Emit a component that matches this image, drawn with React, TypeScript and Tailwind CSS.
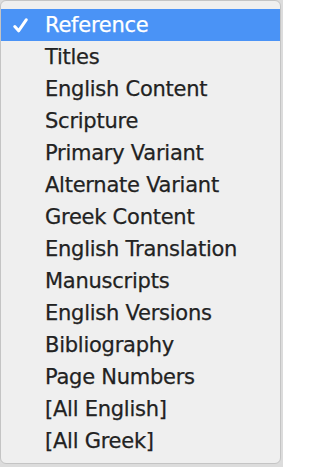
const items = [
  "Reference",
  "Titles",
  "English Content",
  "Scripture",
  "Primary Variant",
  "Alternate Variant",
  "Greek Content",
  "English Translation",
  "Manuscripts",
  "English Versions",
  "Bibliography",
  "Page Numbers",
  "[All English]",
  "[All Greek]",
]

const Check = () => (
  <svg width="15" height="15" viewBox="0 0 15 15" className="block">
    <path
      d="M1.8 8.6 L5.6 12.8 L13.2 1.8"
      fill="none"
      stroke="white"
      strokeWidth="3"
      strokeLinecap="round"
      strokeLinejoin="round"
    />
  </svg>
)

export default function App() {
  return (
    <div className="w-[283px] h-[467px] bg-[#dcdcdc] overflow-hidden">
      <div className="w-[281px] h-[464px] bg-[#efefef] border border-[#c4c4c4] rounded-[6px] pt-[8px] pb-[6px] font-['DejaVu_Sans',sans-serif]">
        {items.map((label, i) => {
          const active = i === 0
          return (
            <div
              key={label}
              className={
                active
                  ? "flex items-center h-[32px] bg-[#4a93f6] text-white"
                  : "flex items-center h-[32px] text-[#222222]"
              }
            >
              <div className="w-[44px] pl-[12px]">{active && <Check />}</div>
              <span className="text-[21px] leading-none tracking-[-0.25px] [-webkit-text-stroke:0.25px_currentColor]">
                {label}
              </span>
            </div>
          )
        })}
      </div>
    </div>
  )
}
